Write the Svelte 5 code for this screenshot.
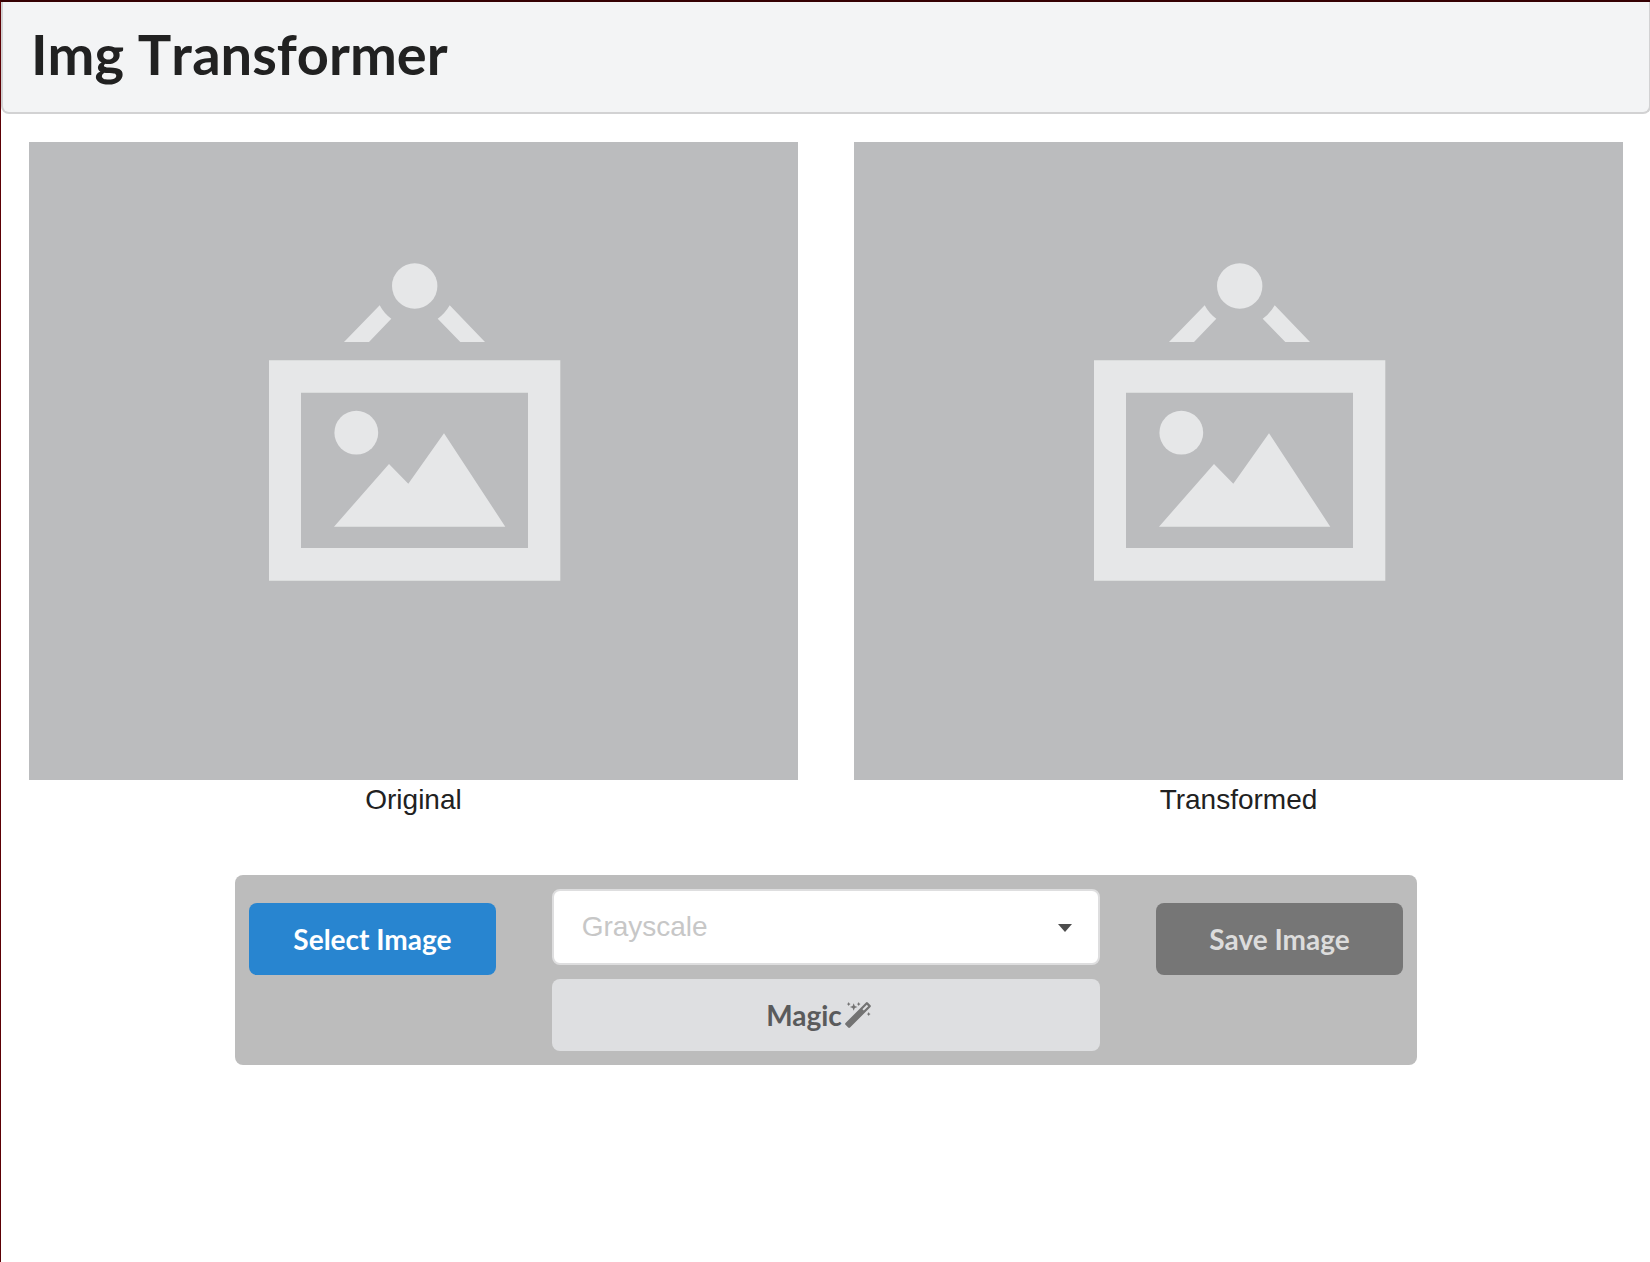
<script>
  const images = ['Original', 'Transformed'];
  const filters = ['Grayscale', 'Sepia', 'Invert', 'Blur'];
  let filter = $state('Grayscale');
</script>

<div class="app">
  <header>
    <h1>Img Transformer</h1>
  </header>

  <main>
    <section class="images">
      {#each images as label}
        <figure>
          <svg class="placeholder" viewBox="0 0 769 638" role="img" aria-label={label}>
            <circle cx="385.7" cy="144" r="22.7" />
            <path d="M350.7 163.3Q355 171.5 362.3 176.7L340 200H315Z" />
            <path d="M420.7 163.3Q416 171.5 408.7 176.7L431.3 200H456Z" />
            <path fill-rule="evenodd" d="M240 218.3H531.3V438.7H240ZM272 250.7V406H499V250.7Z" />
            <circle cx="327.3" cy="290.7" r="21.9" />
            <path d="M305 384.7L360 322L379.3 341.7L415 291.3L476.3 384.7Z" />
          </svg>
          <figcaption>{label}</figcaption>
        </figure>
      {/each}
    </section>

    <section class="panel">
      <div class="controls">
        <div class="side">
          <button class="primary" type="button">Select Image</button>
        </div>
        <div class="middle">
          <div class="dropdown">
            <select aria-label="Transformation" bind:value={filter}>
              {#each filters as name}
                <option value={name}>{name}</option>
              {/each}
            </select>
            <svg class="caret" viewBox="0 0 14 8" aria-hidden="true"><path d="M0 0H14L7 8Z" /></svg>
          </div>
          <button class="magic" type="button" disabled>
            Magic<svg class="wand" viewBox="0 0 26 26" aria-hidden="true">
              <path fill-rule="evenodd" d="M0.5 21L21 0.5Q21.9 -0.3 22.8 0.5L25.5 3.2Q26.3 4.1 25.5 5L5 25.5Q4.1 26.3 3.2 25.5L0.5 22.8Q-0.3 21.9 0.5 21ZM17.4 7.2L18.8 8.6L23.2 4.2L21.8 2.8Z" />
              <path d="M8.7 1.2L9.8 3.9L12.5 5L9.8 6.1L8.7 8.8L7.6 6.1L4.9 5L7.6 3.9Z" />
              <path d="M3.7 0.1L4.4 1.4L5.6 2L4.4 2.7L3.7 3.9L3 2.7L1.8 2L3 1.4ZM13.7 0.1L14.4 1.4L15.6 2L14.4 2.7L13.7 3.9L13 2.7L11.8 2L13 1.4ZM23.7 10.1L24.4 11.4L25.6 12L24.4 12.7L23.7 13.9L23 12.7L21.8 12L23 11.4Z" />
            </svg>
          </button>
        </div>
        <div class="side">
          <button class="save" type="button" disabled>Save Image</button>
        </div>
      </div>
    </section>
  </main>
</div>

<style>
  :global(body) {
    background: #fff;
  }

  .app {
    box-sizing: border-box;
    min-height: 100vh;
    overflow: hidden;
    border-top: 2px solid #350002;
    border-left: 1px solid #5c0004;
    color: #212121;
    font-family: 'Liberation Sans', Arial, sans-serif;
    font-size: 28px;
    line-height: 40px;
  }

  header,
  main {
    margin-right: -1px;
  }

  header {
    padding: 16px 28px 22px;
    border: 2px solid #d2d2d3;
    border-top: 0;
    border-radius: 0 0 8px 8px;
    background: #f3f4f5;
  }

  h1 {
    margin: 0;
    font: 700 56px/72px Lato, sans-serif;
    font-kerning: none;
  }

  .images {
    display: grid;
    grid-template-columns: 1fr 1fr;
    gap: 56px;
    padding: 28px 28px 0;
  }

  figure {
    margin: 0;
    text-align: center;
  }

  .placeholder {
    display: block;
    width: 100%;
    background: #bbbcbe;
    fill: #e6e7e8;
  }

  .panel {
    box-sizing: border-box;
    width: calc(75% - 56px);
    margin: 55px auto 0;
    padding: 14px;
    border-radius: 8px;
    background: #bcbcbc;
  }

  .controls {
    display: grid;
    grid-template-columns: 1fr 2fr 1fr;
    margin: 0 -28px;
  }

  .side,
  .middle {
    padding: 0 28px;
  }

  .side {
    padding-top: 14px;
  }

  .middle {
    display: grid;
    gap: 14px;
  }

  button {
    display: flex;
    align-items: center;
    justify-content: center;
    width: 100%;
    height: 72px;
    padding: 0;
    border: 0;
    border-radius: 8px;
    font: 700 28px/28px Lato, sans-serif;
  }

  .primary {
    background: #2885d0;
    color: #fff;
  }

  .save {
    background: #767676;
    color: #dcdcdc;
  }

  .magic {
    background: #dedfe1;
    color: #5a5b5c;
  }

  .wand {
    width: 26px;
    height: 26px;
    margin: 0 15px 0 3px;
    fill: #737373;
  }

  .dropdown {
    display: grid;
    align-items: center;
  }

  .dropdown > * {
    grid-area: 1 / 1;
  }

  select {
    appearance: none;
    width: 100%;
    height: 76px;
    padding: 0 56px 2px 28px;
    border: 2px solid #dededf;
    border-radius: 8px;
    background: #fff;
    color: #c7c7c7;
    font: 28px 'Liberation Sans', Arial, sans-serif;
  }

  .caret {
    justify-self: end;
    width: 14px;
    height: 8px;
    margin: 2px 28px 0 0;
    fill: #4d4d4d;
    pointer-events: none;
  }
</style>
